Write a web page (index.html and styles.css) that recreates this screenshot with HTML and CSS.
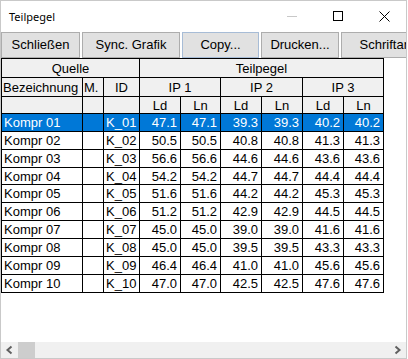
FILE: index.html
```html
<!DOCTYPE html>
<html lang="de">
<head>
<meta charset="utf-8">
<title>Teilpegel</title>
<link rel="stylesheet" href="styles.css">
</head>
<body>
<div class="window">
  <div class="titlebar">
    <span class="title">Teilpegel</span>
    <div class="caption">
      <span class="cap"><svg width="10" height="10" viewBox="0 0 10 10"><line x1="0" y1="5.5" x2="10" y2="5.5" stroke="#c8c8c8" stroke-width="1"/></svg></span>
      <span class="cap"><svg width="10" height="10" viewBox="0 0 10 10"><rect x="0.5" y="0.5" width="9" height="9" fill="none" stroke="#000" stroke-width="1"/></svg></span>
      <span class="cap"><svg width="11" height="11" viewBox="0 0 11 11"><path d="M0.5 0.5 L10.5 10.5 M10.5 0.5 L0.5 10.5" stroke="#000" stroke-width="1" fill="none"/></svg></span>
    </div>
  </div>
  <div class="toolbar">
    <button class="btn b1">Schließen</button>
    <button class="btn b2">Sync. Grafik</button>
    <button class="btn b3 focus">Copy...</button>
    <button class="btn b4">Drucken...</button>
    <button class="btn b5">Schriftart...</button>
  </div>
  <div class="content">
    <div class="grid">
      <div class="cell hd c span3">Quelle</div>
      <div class="cell hd c span6">Teilpegel</div>

      <div class="cell hd l">Bezeichnung</div>
      <div class="cell hd l">M.</div>
      <div class="cell hd c">ID</div>
      <div class="cell hd c span2">IP 1</div>
      <div class="cell hd c span2">IP 2</div>
      <div class="cell hd c span2">IP 3</div>

      <div class="cell hd"></div>
      <div class="cell hd"></div>
      <div class="cell hd"></div>
      <div class="cell hd c">Ld</div>
      <div class="cell hd c">Ln</div>
      <div class="cell hd c">Ld</div>
      <div class="cell hd c">Ln</div>
      <div class="cell hd c">Ld</div>
      <div class="cell hd c">Ln</div>

      <div class="cell sel">Kompr 01</div><div class="cell sel"></div><div class="cell sel">K_01</div><div class="cell sel num">47.1</div><div class="cell sel num">47.1</div><div class="cell sel num">39.3</div><div class="cell sel num">39.3</div><div class="cell sel num">40.2</div><div class="cell sel num">40.2</div>
      <div class="cell">Kompr 02</div><div class="cell"></div><div class="cell">K_02</div><div class="cell num">50.5</div><div class="cell num">50.5</div><div class="cell num">40.8</div><div class="cell num">40.8</div><div class="cell num">41.3</div><div class="cell num">41.3</div>
      <div class="cell">Kompr 03</div><div class="cell"></div><div class="cell">K_03</div><div class="cell num">56.6</div><div class="cell num">56.6</div><div class="cell num">44.6</div><div class="cell num">44.6</div><div class="cell num">43.6</div><div class="cell num">43.6</div>
      <div class="cell">Kompr 04</div><div class="cell"></div><div class="cell">K_04</div><div class="cell num">54.2</div><div class="cell num">54.2</div><div class="cell num">44.7</div><div class="cell num">44.7</div><div class="cell num">44.4</div><div class="cell num">44.4</div>
      <div class="cell">Kompr 05</div><div class="cell"></div><div class="cell">K_05</div><div class="cell num">51.6</div><div class="cell num">51.6</div><div class="cell num">44.2</div><div class="cell num">44.2</div><div class="cell num">45.3</div><div class="cell num">45.3</div>
      <div class="cell">Kompr 06</div><div class="cell"></div><div class="cell">K_06</div><div class="cell num">51.2</div><div class="cell num">51.2</div><div class="cell num">42.9</div><div class="cell num">42.9</div><div class="cell num">44.5</div><div class="cell num">44.5</div>
      <div class="cell">Kompr 07</div><div class="cell"></div><div class="cell">K_07</div><div class="cell num">45.0</div><div class="cell num">45.0</div><div class="cell num">39.0</div><div class="cell num">39.0</div><div class="cell num">41.6</div><div class="cell num">41.6</div>
      <div class="cell">Kompr 08</div><div class="cell"></div><div class="cell">K_08</div><div class="cell num">45.0</div><div class="cell num">45.0</div><div class="cell num">39.5</div><div class="cell num">39.5</div><div class="cell num">43.3</div><div class="cell num">43.3</div>
      <div class="cell">Kompr 09</div><div class="cell"></div><div class="cell">K_09</div><div class="cell num">46.4</div><div class="cell num">46.4</div><div class="cell num">41.0</div><div class="cell num">41.0</div><div class="cell num">45.6</div><div class="cell num">45.6</div>
      <div class="cell">Kompr 10</div><div class="cell"></div><div class="cell">K_10</div><div class="cell num">47.0</div><div class="cell num">47.0</div><div class="cell num">42.5</div><div class="cell num">42.5</div><div class="cell num">47.6</div><div class="cell num">47.6</div>
    </div>
  </div>
  <div class="hscroll">
    <span class="arrow"><svg width="17" height="16" viewBox="0 0 17 16"><polyline points="10.5,4.5 6.5,8 10.5,11.5" fill="none" stroke="#606060" stroke-width="2"/></svg></span>
    <span class="thumb"></span>
    <span class="track"></span>
    <span class="arrow"><svg width="17" height="16" viewBox="0 0 17 16"><polyline points="6.5,4.5 10.5,8 6.5,11.5" fill="none" stroke="#606060" stroke-width="2"/></svg></span>
  </div>
</div>
</body>
</html>
```

FILE: styles.css
```css
* { box-sizing: border-box; }
html, body {
  margin: 0;
  padding: 0;
  width: 408px;
  height: 359px;
  overflow: hidden;
  background: #ffffff;
}
body {
  font-family: "Liberation Sans", Arial, sans-serif;
  font-size: 13px;
  color: #000;
}
.window {
  width: 407px;
  height: 359px;
  border: 1px solid #c9c9c9;
  display: flex;
  flex-direction: column;
  overflow: hidden;
  background: #fff;
}
.titlebar {
  height: 31px;
  flex: none;
  display: flex;
  align-items: center;
  justify-content: space-between;
}
.title {
  font-family: "Noto Sans", "Open Sans", sans-serif;
  font-size: 11px;
  padding-left: 8px;
  padding-bottom: 1px;
}
.caption {
  display: flex;
  height: 31px;
  margin-right: -1px;
}
.cap {
  width: 46px;
  height: 31px;
  display: flex;
  align-items: center;
  justify-content: center;
  padding-bottom: 1px;
}
.cap svg { display: block; }
.toolbar {
  height: 26px;
  flex: none;
  display: flex;
  gap: 2px;
  white-space: nowrap;
}
.btn {
  flex: none;
  height: 26px;
  margin: 0;
  padding: 0 0 1px 0;
  border: 1px solid #adadad;
  background: #e1e1e1;
  font-family: "Liberation Sans", Arial, sans-serif;
  font-size: 13px;
  color: #000;
}
.btn.focus { border-color: #a7bcd6; }
.b1 { width: 79px; }
.b2 { width: 98px; }
.b3 { width: 77px; }
.b4 { width: 78px; }
.b5 { width: 100px; }
.content {
  flex: 1;
  overflow: hidden;
}
.grid {
  display: inline-grid;
  grid-template-columns: 81px 21px 36px 41px 40px 41px 41px 41px 40px;
  grid-template-rows: 19px 19px 17px 18px 18px 18px 17px 18px 18px 18px 18px 18px 18px;
  border-top: 1px solid #000;
  border-left: 1px solid #000;
}
.cell {
  border-right: 1px solid #000;
  border-bottom: 1px solid #000;
  display: flex;
  align-items: center;
  padding: 0 3px 0 2px;
  white-space: nowrap;
  overflow: hidden;
  background: #fff;
}
.hd { background: #f0f0f0; }
.hd.l { padding-left: 1px; }
.c { justify-content: center; padding: 0; }
.num { justify-content: flex-end; }
.span2 { grid-column: span 2; }
.span3 { grid-column: span 3; }
.span6 { grid-column: span 6; }
.sel { background: #0078d7; color: #fff; }
.hscroll {
  height: 16px;
  flex: none;
  display: flex;
  background: #f0f0f0;
}
.arrow {
  width: 17px;
  height: 16px;
  flex: none;
}
.arrow svg { display: block; }
.thumb {
  width: 17px;
  height: 16px;
  background: #cdcdcd;
  flex: none;
}
.track { flex: 1; }
```
